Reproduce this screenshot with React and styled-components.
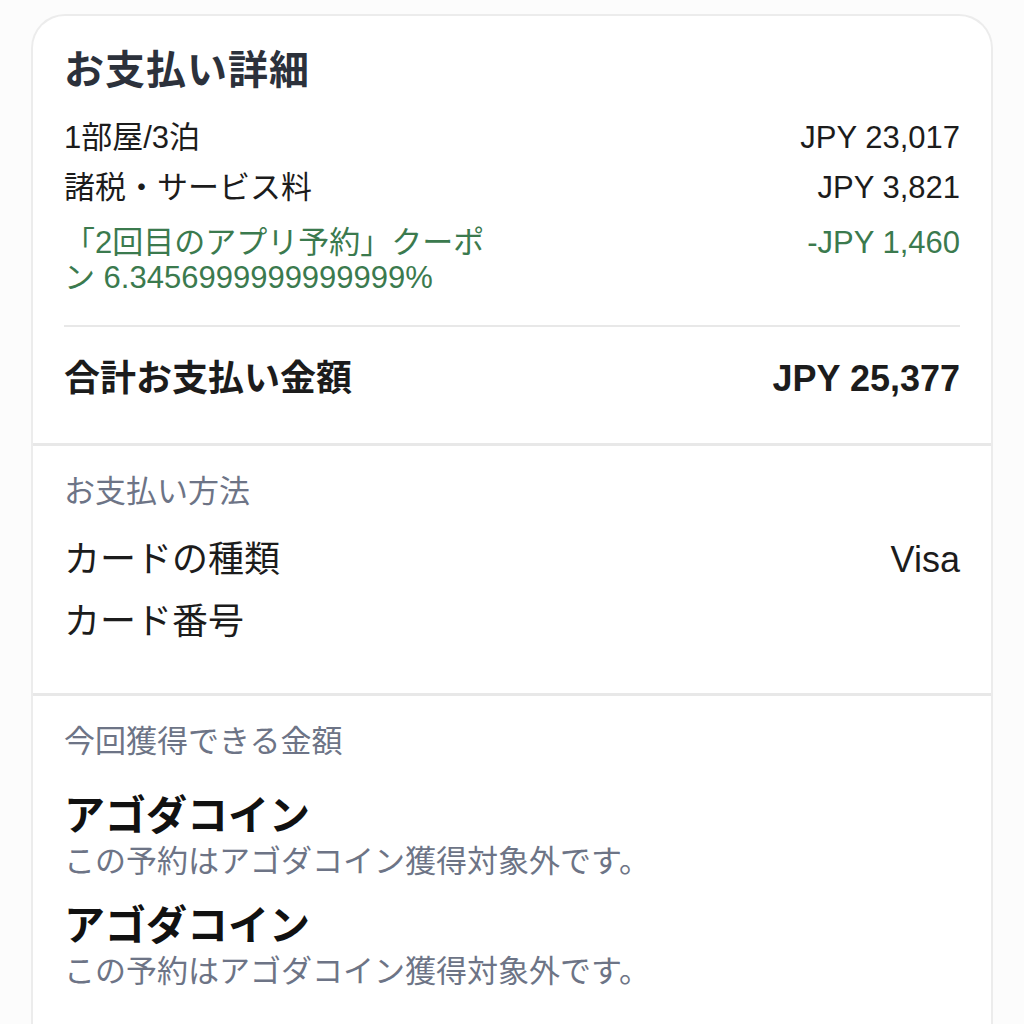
import React from 'react';
import styled, { createGlobalStyle } from 'styled-components';

const GlobalStyle = createGlobalStyle`
  body {
    margin: 0;
    background: #fcfcfc;
    font-family: "Liberation Sans", "Noto Sans CJK JP", sans-serif;
  }
`;

const Page = styled.div`
  padding: 14px 31px 0;
`;

const Card = styled.div`
  background: #ffffff;
  border: 2px solid #ececec;
  border-bottom: none;
  border-radius: 34px 34px 0 0;
  overflow: hidden;
`;

const Section = styled.section`
  padding: ${p => p.$pad || '26px 31px 40px'};
  border-bottom: 3px solid #e8e8e8;
`;

const Title = styled.h1`
  margin: 0;
  font-family: "Noto Sans CJK JP", sans-serif;
  font-size: 40px;
  font-weight: 700;
  line-height: 50px;
  color: #2c313b;
  letter-spacing: 1px;
`;

const Row = styled.div`
  display: flex;
  justify-content: space-between;
  align-items: flex-start;
  font-size: ${p => p.$size || '31px'};
  font-weight: ${p => (p.$bold ? 700 : 400)};
  line-height: ${p => p.$lh || '50px'};
  color: ${p => (p.$green ? '#3b7a4e' : '#1c1c1c')};
  margin-top: ${p => p.$mt || '0'};
`;

const Label = styled.span`
  max-width: ${p => p.$max || 'none'};
`;

const Amount = styled.span`
  white-space: nowrap;
`;

const Divider = styled.hr`
  margin: 30px 0 27px;
  border: none;
  height: 2px;
  background: #e8e8e8;
`;

const Caption = styled.div`
  font-size: 31px;
  line-height: 40px;
  color: #6d7486;
  margin-top: ${p => p.$mt || '0'};
  margin-bottom: ${p => p.$mb || '0'};
`;

const CoinTitle = styled.div`
  font-family: "Noto Sans CJK JP", sans-serif;
  font-size: 41px;
  font-weight: 700;
  line-height: 50px;
  color: #111111;
  margin-top: ${p => p.$mt || '0'};
`;

export default function App() {
  return (
    <>
      <GlobalStyle />
      <Page>
        <Card>
          <Section $pad="26px 31px 39px">
            <Title>お支払い詳細</Title>
            <Row $mt="21px">
              <Label>1部屋/3泊</Label>
              <Amount>JPY 23,017</Amount>
            </Row>
            <Row>
              <Label>諸税・サービス料</Label>
              <Amount>JPY 3,821</Amount>
            </Row>
            <Row $green $lh="35px" $mt="12px">
              <Label $max="440px">「2回目のアプリ予約」クーポン 6.3456999999999999%</Label>
              <Amount>-JPY 1,460</Amount>
            </Row>
            <Divider />
            <Row $bold $size="36px">
              <Label>合計お支払い金額</Label>
              <Amount>JPY 25,377</Amount>
            </Row>
          </Section>

          <Section>
            <Caption $mb="17px">お支払い方法</Caption>
            <Row $size="36px" $lh="62px">
              <Label>カードの種類</Label>
              <Amount>Visa</Amount>
            </Row>
            <Row $size="36px" $lh="62px">
              <Label>カード番号</Label>
              <Amount></Amount>
            </Row>
          </Section>

          <Section $pad="26px 31px 60px">
            <Caption $mb="25px">今回獲得できる金額</Caption>
            <CoinTitle>アゴダコイン</CoinTitle>
            <Caption $mt="5px">この予約はアゴダコイン獲得対象外です。</Caption>
            <CoinTitle $mt="15px">アゴダコイン</CoinTitle>
            <Caption $mt="5px">この予約はアゴダコイン獲得対象外です。</Caption>
          </Section>
        </Card>
      </Page>
    </>
  );
}
